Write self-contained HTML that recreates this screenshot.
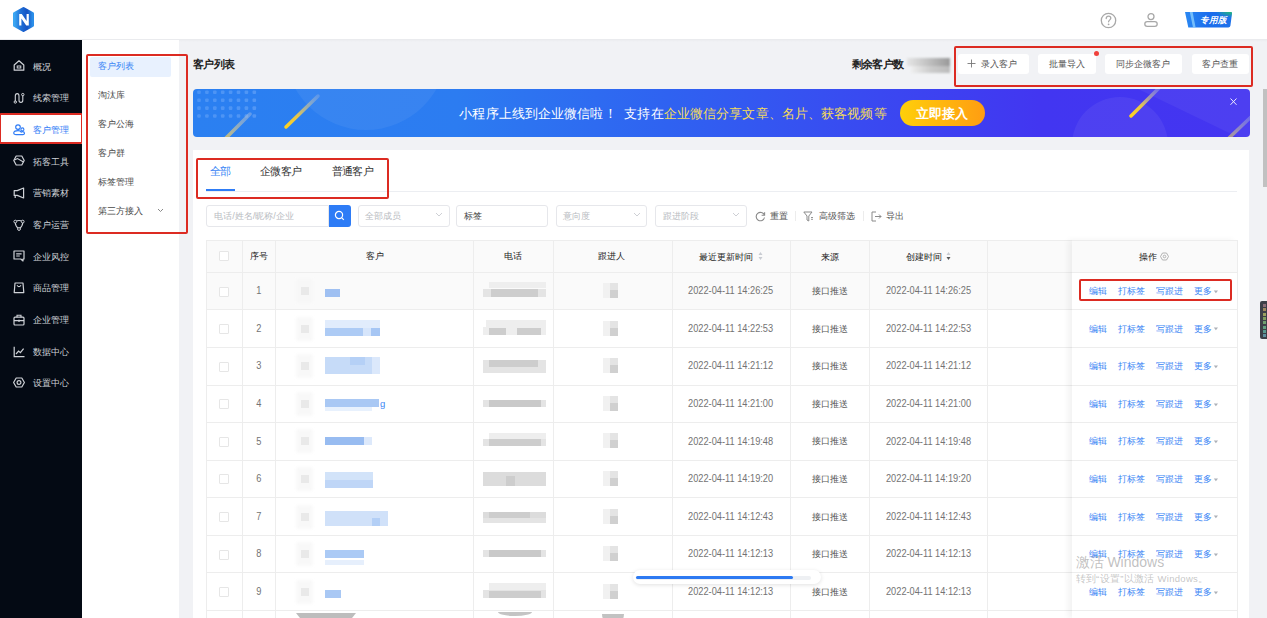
<!DOCTYPE html><html><head><meta charset="utf-8"><title>客户列表</title><style>
*{margin:0;padding:0;box-sizing:border-box}
html,body{width:1267px;height:618px;overflow:hidden;background:#f1f2f5;font-family:"Liberation Sans",sans-serif;color:#333;position:relative}
.a{position:absolute}
.t{position:absolute;white-space:nowrap;line-height:1}
.red{position:absolute;border:2px solid #dc2b22;border-radius:2px}
.mi{position:absolute;left:33px;font-size:9.24px;color:#cfd2d7;line-height:1;white-space:nowrap}
.ic{position:absolute;left:13px}
.si{position:absolute;left:98px;font-size:9.24px;color:#555;line-height:1;white-space:nowrap}
.btn{position:absolute;top:54px;height:20px;background:#fff;border-radius:3px}
.bt{position:absolute;top:59.5px;font-size:9.24px;color:#555;line-height:1;white-space:nowrap}
.inp{position:absolute;top:205px;height:21.5px;background:#fff;border:1px solid #e6e7eb;border-radius:3px}
.ph{position:absolute;top:211.6px;font-size:9.24px;color:#b9bcc2;line-height:1;white-space:nowrap}
.chev{position:absolute;top:212px}
.hl{position:absolute;background:#ededed}
.th{position:absolute;top:252.5px;font-size:9.24px;color:#222;font-weight:500;line-height:1;white-space:nowrap}
.td{position:absolute;font-size:9.24px;color:#555;line-height:1;white-space:nowrap}
.act{position:absolute;font-size:9.24px;color:#3b86f5;line-height:1;white-space:nowrap}
.cb{position:absolute;left:219px;width:10px;height:10px;border:1px solid #e6e6e6;border-radius:1px;background:#fff}
</style></head><body>
<div class="a" style="left:0;top:0;width:1267px;height:39px;background:#fff"></div>
<div class="a" style="left:0;top:39px;width:1267px;height:3px;background:linear-gradient(180deg,#e9eaed,#f1f2f5)"></div>
<svg class="a" style="left:11px;top:6px" width="25" height="27" viewBox="0 0 25 27">
<defs><linearGradient id="lg" x1="0" y1="0" x2="1" y2="0"><stop offset="0" stop-color="#3ba6f2"/><stop offset="0.35" stop-color="#1f6fd6"/><stop offset="0.7" stop-color="#1553c4"/><stop offset="1" stop-color="#2a8de8"/></linearGradient></defs>
<path d="M12.5 2.5 L21.5 7.5 L21.5 19.5 L12.5 24.5 L3.5 19.5 L3.5 7.5 Z" fill="url(#lg)" stroke="url(#lg)" stroke-width="3" stroke-linejoin="round"/>
<path d="M8.2 19.5 V8 H10.8 L15.6 15 V8 H17.8 V19.5 H15.2 L10.4 12.4 V19.5 Z" fill="#fff"/>
</svg>
<svg class="a" style="left:1100px;top:12px" width="17" height="17" viewBox="0 0 17 17">
<circle cx="8.5" cy="8.5" r="7.2" fill="none" stroke="#a8a8a8" stroke-width="1.3"/>
<path d="M6.2 6.6 C6.2 4.9 7.3 4.2 8.5 4.2 C9.8 4.2 10.8 5 10.8 6.3 C10.8 7.8 8.6 8 8.6 9.8" fill="none" stroke="#a8a8a8" stroke-width="1.3" stroke-linecap="round"/>
<circle cx="8.6" cy="12.3" r="0.9" fill="#a8a8a8"/>
</svg>
<svg class="a" style="left:1143px;top:12px" width="16" height="16" viewBox="0 0 16 16">
<circle cx="8" cy="4.6" r="3" fill="none" stroke="#a8a8a8" stroke-width="1.3"/>
<rect x="1.8" y="9.6" width="12.4" height="4.8" rx="2.4" fill="none" stroke="#a8a8a8" stroke-width="1.3"/>
</svg>
<svg class="a" style="left:1184px;top:11px" width="49" height="18" viewBox="0 0 49 18">
<defs><linearGradient id="bg1" x1="0" y1="0" x2="1" y2="0"><stop offset="0" stop-color="#2a88f2"/><stop offset="0.5" stop-color="#1a6cec"/><stop offset="1" stop-color="#1d72ea"/></linearGradient>
<radialGradient id="bgg" cx="1" cy="0" r="0.35"><stop offset="0" stop-color="#22c06a" stop-opacity="0.95"/><stop offset="1" stop-color="#22c06a" stop-opacity="0"/></radialGradient></defs>
<path d="M1 1 H47 Q48.2 1 48 2.5 L46.4 14.8 Q46.1 16.6 44.3 16.6 H4.3 Z" fill="url(#bg1)"/>
<path d="M1 1 H47 Q48.2 1 48 2.5 L46.4 14.8 Q46.1 16.6 44.3 16.6 H4.3 Z" fill="url(#bgg)"/>
<path d="M5.8 1 L8.6 1 L11.6 16.6 L9 16.6 Z" fill="#8fd3ff" opacity="0.75"/>
<text x="15.8" y="12.3" font-size="8.6" font-weight="900" font-style="italic" fill="#fff">专用版</text>
</svg>
<div class="a" style="left:0;top:40px;width:82px;height:578px;background:#040a14"></div>
<svg class="ic" style="top:59.60px" width="12" height="12" viewBox="0 0 12 12"><path d="M1.2 5 L6 0.8 L10.8 5 V10.2 H1.2 Z" fill="none" stroke="#cfd2d7" stroke-width="1.2" stroke-linejoin="round"/><rect x="4.2" y="6" width="3.6" height="2" fill="none" stroke="#cfd2d7" stroke-width="1"/></svg>
<div class="mi" style="top:62.70px;color:#cfd2d7">概况</div>
<svg class="ic" style="top:91.50px" width="12" height="12" viewBox="0 0 12 12"><path d="M2.3 9.6 V4 Q2.3 1.6 4.2 1.6 Q6 1.6 6 4 V8.2 Q6 10.4 7.9 10.4 Q9.8 10.4 9.8 8.2 V3.6" fill="none" stroke="#cfd2d7" stroke-width="1.1"/><circle cx="2.3" cy="10" r="1.2" fill="none" stroke="#cfd2d7" stroke-width="1"/><circle cx="9.8" cy="2.6" r="1.2" fill="none" stroke="#cfd2d7" stroke-width="1"/></svg>
<div class="mi" style="top:94.35px;color:#cfd2d7">线索管理</div>
<div class="a" style="left:0;top:114.5px;width:82px;height:29px;background:#fff"></div>
<svg class="ic" style="top:124.20px" width="12" height="12" viewBox="0 0 12 12"><circle cx="5" cy="3.1" r="2.3" fill="none" stroke="#2f7cf6" stroke-width="1.2"/><circle cx="9.4" cy="5.4" r="1.5" fill="none" stroke="#2f7cf6" stroke-width="1.1"/><path d="M3.2 10.6 Q0.6 10.6 0.8 8.6 Q1.2 6.6 5 6.6 Q7.6 6.6 8.3 8.2 Q8.8 7.6 9.6 7.7 Q11.6 8 11.4 9.6 Q11.2 10.6 10 10.6 Z" fill="none" stroke="#2f7cf6" stroke-width="1.2" stroke-linejoin="round"/></svg>
<div class="mi" style="top:126.00px;color:#2f7cf6">客户管理</div>
<svg class="ic" style="top:155.40px" width="12" height="12" viewBox="0 0 12 12"><path d="M3.2 1 H8.8 L11.2 5.5 L8.8 10 H3.2 L0.8 5.5 Z" fill="none" stroke="#cfd2d7" stroke-width="1.2" stroke-linejoin="round"/><path d="M1.5 5 L4.5 3.5 L10.5 7" fill="none" stroke="#cfd2d7" stroke-width="1.1"/></svg>
<div class="mi" style="top:157.65px;color:#cfd2d7">拓客工具</div>
<svg class="ic" style="top:186.60px" width="12" height="12" viewBox="0 0 12 12"><path d="M1.2 3.6 H4.2 L10.6 1 V11 L4.2 8.4 H1.2 Z" fill="none" stroke="#cfd2d7" stroke-width="1.2" stroke-linejoin="round"/><path d="M2.2 8.4 V11" stroke="#cfd2d7" stroke-width="1.2"/></svg>
<div class="mi" style="top:189.30px;color:#cfd2d7">营销素材</div>
<svg class="ic" style="top:218.60px" width="12" height="12" viewBox="0 0 12 12"><path d="M2.5 2.5 Q6 0.5 9.5 2.5 Q10.5 6.5 6 10 Q1.5 6.5 2.5 2.5 Z" fill="none" stroke="#cfd2d7" stroke-width="1.1"/><circle cx="2.3" cy="2.6" r="1.4" fill="#040a14" stroke="#cfd2d7" stroke-width="1"/><circle cx="9.7" cy="2.6" r="1.4" fill="#040a14" stroke="#cfd2d7" stroke-width="1"/><circle cx="6" cy="10" r="1.4" fill="#040a14" stroke="#cfd2d7" stroke-width="1"/></svg>
<div class="mi" style="top:220.95px;color:#cfd2d7">客户运营</div>
<svg class="ic" style="top:250.40px" width="12" height="12" viewBox="0 0 12 12"><path d="M1 1 H11 V9 H10 V11 L7.8 9 H1 Z" fill="none" stroke="#cfd2d7" stroke-width="1.2" stroke-linejoin="round"/><path d="M3.2 3.8 H8.6 M3.2 6 H6.8" stroke="#cfd2d7" stroke-width="1.2"/></svg>
<div class="mi" style="top:252.60px;color:#cfd2d7">企业风控</div>
<svg class="ic" style="top:282.30px" width="12" height="12" viewBox="0 0 12 12"><path d="M2 1 H10 L10.8 10.6 H1.2 Z" fill="none" stroke="#cfd2d7" stroke-width="1.2" stroke-linejoin="round"/><path d="M4 3.2 Q6 6 8 3.2" fill="none" stroke="#cfd2d7" stroke-width="1.1"/></svg>
<div class="mi" style="top:284.25px;color:#cfd2d7">商品管理</div>
<svg class="ic" style="top:313.60px" width="12" height="12" viewBox="0 0 12 12"><rect x="1" y="3.2" width="10" height="7.8" rx="1" fill="none" stroke="#cfd2d7" stroke-width="1.2"/><path d="M4 3.2 V1.2 H8 V3.2 M1 6.6 H11" fill="none" stroke="#cfd2d7" stroke-width="1.1"/><rect x="5" y="5.8" width="2" height="1.8" fill="#cfd2d7"/></svg>
<div class="mi" style="top:315.90px;color:#cfd2d7">企业管理</div>
<svg class="ic" style="top:346.10px" width="12" height="12" viewBox="0 0 12 12"><path d="M1.2 0.8 V10.6 H11.5" fill="none" stroke="#cfd2d7" stroke-width="1.2"/><path d="M3 8 L5.6 5 L7.4 6.6 L10.6 2.6" fill="none" stroke="#cfd2d7" stroke-width="1.2"/></svg>
<div class="mi" style="top:347.55px;color:#cfd2d7">数据中心</div>
<svg class="ic" style="top:377.40px" width="12" height="12" viewBox="0 0 12 12"><path d="M3.2 1 H8.8 L11.4 5.5 L8.8 10 H3.2 L0.6 5.5 Z" fill="none" stroke="#cfd2d7" stroke-width="1.2" stroke-linejoin="round"/><circle cx="6" cy="5.5" r="1.9" fill="none" stroke="#cfd2d7" stroke-width="1.2"/></svg>
<div class="mi" style="top:379.20px;color:#cfd2d7">设置中心</div>
<div class="red" style="left:-1px;top:113.4px;width:84.2px;height:30.6px"></div>
<div class="a" style="left:82px;top:40px;width:97px;height:578px;background:#fff"></div>
<div class="a" style="left:90px;top:57px;width:81px;height:19.5px;background:#e8f1fe;border-radius:2px"></div>
<div class="si" style="top:62.00px;color:#3b86f5">客户列表</div>
<div class="si" style="top:91.10px;color:#4a4a4a">淘汰库</div>
<div class="si" style="top:120.20px;color:#4a4a4a">客户公海</div>
<div class="si" style="top:148.90px;color:#4a4a4a">客户群</div>
<div class="si" style="top:178.20px;color:#4a4a4a">标签管理</div>
<div class="si" style="top:207.40px;color:#4a4a4a">第三方接入</div>
<svg class="a" style="left:157px;top:208px" width="7" height="5" viewBox="0 0 7 5"><path d="M1 1 L3.5 3.5 L6 1" fill="none" stroke="#888" stroke-width="1"/></svg>
<div class="red" style="left:86px;top:54px;width:102px;height:179.5px"></div>
<div class="t" style="left:193px;top:59px;font-size:10.56px;font-weight:bold;color:#222;letter-spacing:-0.6px">客户列表</div>
<div class="t" style="left:851.5px;top:58.5px;font-size:10.56px;font-weight:bold;color:#222;letter-spacing:-0.6px">剩余客户数</div>
<div class="a" style="left:907px;top:58px;width:43px;height:15px;filter:blur(0.8px)"><div class="a" style="left:0;top:0;width:43px;height:8px;background:linear-gradient(90deg,#e5e5e5,#c8c8c8 40%,#999 100%)"></div><div class="a" style="left:4px;top:8px;width:39px;height:7px;background:linear-gradient(90deg,#eee,#ccc 50%,#bbb)"></div></div>
<div class="red" style="left:954px;top:46px;width:299px;height:40.5px"></div>
<div class="btn" style="left:958.4px;width:70.2px"></div>
<div class="bt" style="left:981.3px">录入客户</div>
<div class="btn" style="left:1038.2px;width:58.1px"></div>
<div class="bt" style="left:1049px">批量导入</div>
<div class="btn" style="left:1105.3px;width:76.3px"></div>
<div class="bt" style="left:1116.2px">同步企微客户</div>
<div class="btn" style="left:1191.6px;width:57.1px"></div>
<div class="bt" style="left:1201.5px">客户查重</div>
<svg class="a" style="left:966.5px;top:58.6px" width="9" height="9" viewBox="0 0 9 9"><path d="M4.5 0.5 V8.5 M0.5 4.5 H8.5" stroke="#777" stroke-width="0.9"/></svg>
<div class="a" style="left:1093.8px;top:50.7px;width:5px;height:5px;border-radius:50%;background:#f0413c"></div>
<div class="a" style="left:192.8px;top:89px;width:1057px;height:47.5px;border-radius:4px;overflow:hidden;background:linear-gradient(90deg,#2b80f1 0%,#2c7cf1 25%,#2f62f1 45%,#3a48f1 65%,#4236f1 80%,#4435f1 100%)">
<svg class="a" style="left:0;top:0" width="1057" height="48" viewBox="0 0 1057 48">
<defs>
<linearGradient id="st1" x1="0" y1="1" x2="1" y2="0"><stop offset="0" stop-color="#ffd21f"/><stop offset="0.35" stop-color="#e6c64a"/><stop offset="1" stop-color="#b9c3d8" stop-opacity="0.3"/></linearGradient>
<linearGradient id="st2" x1="0" y1="1" x2="1" y2="0"><stop offset="0" stop-color="#d8c26a" stop-opacity="0.9"/><stop offset="1" stop-color="#b4c4e0" stop-opacity="0.4"/></linearGradient>
</defs>
<circle cx="173" cy="-40" r="81" fill="#ffffff" opacity="0.06"/>
<circle cx="927" cy="56" r="48" fill="#ffffff" opacity="0.06"/>
<path d="M945 0 L1057 0 L1057 54 Z" fill="#ffffff" opacity="0.05"/>


<rect x="4.2" y="1.5" width="3.6" height="3.6" rx="1" fill="#9cc4ff" opacity="0.28"/><rect x="12.1" y="1.5" width="3.6" height="3.6" rx="1" fill="#9cc4ff" opacity="0.29"/><rect x="20.0" y="1.5" width="3.6" height="3.6" rx="1" fill="#9cc4ff" opacity="0.30"/><rect x="27.9" y="1.5" width="3.6" height="3.6" rx="1" fill="#9cc4ff" opacity="0.31"/><rect x="35.8" y="1.5" width="3.6" height="3.6" rx="1" fill="#9cc4ff" opacity="0.31"/><rect x="43.7" y="1.5" width="3.6" height="3.6" rx="1" fill="#9cc4ff" opacity="0.32"/><rect x="51.6" y="1.5" width="3.6" height="3.6" rx="1" fill="#9cc4ff" opacity="0.33"/><rect x="59.5" y="1.5" width="3.6" height="3.6" rx="1" fill="#9cc4ff" opacity="0.34"/><rect x="4.2" y="9.4" width="3.6" height="3.6" rx="1" fill="#9cc4ff" opacity="0.28"/><rect x="12.1" y="9.4" width="3.6" height="3.6" rx="1" fill="#9cc4ff" opacity="0.29"/><rect x="20.0" y="9.4" width="3.6" height="3.6" rx="1" fill="#9cc4ff" opacity="0.30"/><rect x="27.9" y="9.4" width="3.6" height="3.6" rx="1" fill="#9cc4ff" opacity="0.31"/><rect x="35.8" y="9.4" width="3.6" height="3.6" rx="1" fill="#9cc4ff" opacity="0.31"/><rect x="43.7" y="9.4" width="3.6" height="3.6" rx="1" fill="#9cc4ff" opacity="0.32"/><rect x="51.6" y="9.4" width="3.6" height="3.6" rx="1" fill="#9cc4ff" opacity="0.33"/><rect x="59.5" y="9.4" width="3.6" height="3.6" rx="1" fill="#9cc4ff" opacity="0.34"/><rect x="4.2" y="17.3" width="3.6" height="3.6" rx="1" fill="#9cc4ff" opacity="0.28"/><rect x="12.1" y="17.3" width="3.6" height="3.6" rx="1" fill="#9cc4ff" opacity="0.29"/><rect x="20.0" y="17.3" width="3.6" height="3.6" rx="1" fill="#9cc4ff" opacity="0.30"/><rect x="27.9" y="17.3" width="3.6" height="3.6" rx="1" fill="#9cc4ff" opacity="0.31"/><rect x="35.8" y="17.3" width="3.6" height="3.6" rx="1" fill="#9cc4ff" opacity="0.31"/><rect x="43.7" y="17.3" width="3.6" height="3.6" rx="1" fill="#9cc4ff" opacity="0.32"/><rect x="51.6" y="17.3" width="3.6" height="3.6" rx="1" fill="#9cc4ff" opacity="0.33"/><rect x="59.5" y="17.3" width="3.6" height="3.6" rx="1" fill="#9cc4ff" opacity="0.34"/><rect x="4.2" y="25.2" width="3.6" height="3.6" rx="1" fill="#9cc4ff" opacity="0.28"/><rect x="12.1" y="25.2" width="3.6" height="3.6" rx="1" fill="#9cc4ff" opacity="0.29"/><rect x="20.0" y="25.2" width="3.6" height="3.6" rx="1" fill="#9cc4ff" opacity="0.30"/><rect x="27.9" y="25.2" width="3.6" height="3.6" rx="1" fill="#9cc4ff" opacity="0.31"/><rect x="35.8" y="25.2" width="3.6" height="3.6" rx="1" fill="#9cc4ff" opacity="0.31"/><rect x="43.7" y="25.2" width="3.6" height="3.6" rx="1" fill="#9cc4ff" opacity="0.32"/><rect x="51.6" y="25.2" width="3.6" height="3.6" rx="1" fill="#9cc4ff" opacity="0.33"/><rect x="59.5" y="25.2" width="3.6" height="3.6" rx="1" fill="#9cc4ff" opacity="0.34"/>
<path d="M33 49 L57 25" stroke="url(#st2)" stroke-width="3.5" stroke-linecap="round"/>
<path d="M93 38 L125 7" stroke="url(#st1)" stroke-width="3.5" stroke-linecap="round"/>
<path d="M938 27 L966 -1" stroke="url(#st1)" stroke-width="3.5" stroke-linecap="round"/>
<path d="M1036 49 L1058 28" stroke="url(#st2)" stroke-width="3.5" stroke-linecap="round" opacity="0.8"/>
<path d="M1037.5 9.5 L1043.5 15.8 M1043.5 9.5 L1037.5 15.8" stroke="#fff" stroke-width="1" opacity="0.9"/>
</svg>
<div class="t" style="left:266.5px;top:18px;font-size:13.2px;color:#fff;letter-spacing:0.12px">小程序上线到企业微信啦！&nbsp;&nbsp;支持在<span style="color:#f5dc5a">企业微信分享文章、名片、获客视频等</span></div>
<div class="a" style="left:707.5px;top:10.8px;width:84.5px;height:26px;border-radius:13px;background:linear-gradient(90deg,#ffcf0a,#ff9d12)"></div>
<div class="t" style="left:723px;top:17.5px;font-size:13.2px;font-weight:bold;color:#fff">立即接入</div>
</div>
<div class="a" style="left:192.8px;top:150px;width:1056.7px;height:468px;background:#fff"></div>
<div class="t" style="left:210px;top:166px;font-size:10.56px;color:#3b86f5;letter-spacing:-0.6px">全部</div>
<div class="t" style="left:260px;top:166px;font-size:10.56px;color:#333;letter-spacing:-0.6px">企微客户</div>
<div class="t" style="left:331.5px;top:166px;font-size:10.56px;color:#333;letter-spacing:-0.6px">普通客户</div>
<div class="a" style="left:206px;top:191px;width:1031px;height:1px;background:#eceef2"></div>
<div class="a" style="left:206px;top:189px;width:29px;height:2.3px;background:#2e7cf6"></div>
<div class="red" style="left:195.5px;top:157.5px;width:193.5px;height:41px"></div>
<div class="inp" style="left:206px;width:123px;border-radius:3px 0 0 3px"></div>
<div class="ph" style="left:214.2px">电话/姓名/昵称/企业</div>
<div class="a" style="left:328.5px;top:205px;width:22px;height:21.5px;background:#2e7cf6;border-radius:0 3px 3px 0"></div>
<svg class="a" style="left:334px;top:210px" width="11" height="11" viewBox="0 0 11 11"><circle cx="5" cy="5" r="3.6" fill="none" stroke="#fff" stroke-width="1.2"/><path d="M7.6 7.6 L9.8 9.8" stroke="#fff" stroke-width="1.2"/></svg>
<div class="inp" style="left:357.5px;width:92.0px"></div>
<div class="ph" style="left:365px;color:#b9bcc2">全部成员</div>
<svg class="chev" style="left:434.5px" width="8" height="6" viewBox="0 0 8 6"><path d="M1 1 L4 4 L7 1" fill="none" stroke="#c8cbd0" stroke-width="0.9"/></svg>
<div class="inp" style="left:456px;width:92.0px"></div>
<div class="ph" style="left:464.4px;color:#444">标签</div>
<div class="inp" style="left:555.8px;width:91.7px"></div>
<div class="ph" style="left:563.3px;color:#b9bcc2">意向度</div>
<svg class="chev" style="left:632.5px" width="8" height="6" viewBox="0 0 8 6"><path d="M1 1 L4 4 L7 1" fill="none" stroke="#c8cbd0" stroke-width="0.9"/></svg>
<div class="inp" style="left:654.5px;width:92.0px"></div>
<div class="ph" style="left:662.8px;color:#b9bcc2">跟进阶段</div>
<svg class="chev" style="left:731.5px" width="8" height="6" viewBox="0 0 8 6"><path d="M1 1 L4 4 L7 1" fill="none" stroke="#c8cbd0" stroke-width="0.9"/></svg>
<svg class="a" style="left:754.5px;top:211px" width="11" height="11" viewBox="0 0 11 11"><path d="M9.3 4 A4.2 4.2 0 1 0 9.5 6.5" fill="none" stroke="#8a8a8a" stroke-width="1.1"/><path d="M9.6 1.2 V4.2 H6.6" fill="none" stroke="#8a8a8a" stroke-width="1.1"/></svg>
<div class="t" style="left:769.8px;top:211.5px;font-size:9.24px;color:#555">重置</div>
<div class="a" style="left:795px;top:211px;width:1px;height:10px;background:#ececec"></div>
<svg class="a" style="left:803px;top:211px" width="11" height="11" viewBox="0 0 11 11"><path d="M0.8 1 H9 L5.8 5 V10 L4 9 V5 Z" fill="none" stroke="#8a8a8a" stroke-width="1" stroke-linejoin="round"/><path d="M8 6.5 H10 M8 8.3 H10" stroke="#8a8a8a" stroke-width="0.9"/></svg>
<div class="t" style="left:818.8px;top:211.5px;font-size:9.24px;color:#555">高级筛选</div>
<div class="a" style="left:862.5px;top:211px;width:1px;height:10px;background:#ececec"></div>
<svg class="a" style="left:870.5px;top:211px" width="11" height="11" viewBox="0 0 11 11"><path d="M5 1 H1 V10 H5" fill="none" stroke="#8a8a8a" stroke-width="1"/><path d="M4 5.5 H10 M8 3.5 L10 5.5 L8 7.5" fill="none" stroke="#8a8a8a" stroke-width="1"/></svg>
<div class="t" style="left:886.3px;top:211.5px;font-size:9.24px;color:#555">导出</div>
<div class="a" style="left:206px;top:240px;width:1031px;height:32px;background:#fafafa"></div>
<div class="a" style="left:206px;top:272.2px;width:1031px;height:37.5px;background:#fafafa"></div>
<div class="hl" style="left:206px;top:240px;width:1031px;height:1px"></div>
<div class="hl" style="left:206px;top:271.80px;width:1031px;height:1px"></div>
<div class="hl" style="left:206px;top:309.38px;width:1031px;height:1px"></div>
<div class="hl" style="left:206px;top:346.96px;width:1031px;height:1px"></div>
<div class="hl" style="left:206px;top:384.54px;width:1031px;height:1px"></div>
<div class="hl" style="left:206px;top:422.12px;width:1031px;height:1px"></div>
<div class="hl" style="left:206px;top:459.70px;width:1031px;height:1px"></div>
<div class="hl" style="left:206px;top:497.28px;width:1031px;height:1px"></div>
<div class="hl" style="left:206px;top:534.86px;width:1031px;height:1px"></div>
<div class="hl" style="left:206px;top:572.44px;width:1031px;height:1px"></div>
<div class="hl" style="left:206px;top:610.02px;width:1031px;height:1px"></div>
<div class="hl" style="left:205.50px;top:240px;width:1px;height:378px"></div>
<div class="hl" style="left:241.80px;top:240px;width:1px;height:378px"></div>
<div class="hl" style="left:275.00px;top:240px;width:1px;height:378px"></div>
<div class="hl" style="left:473.10px;top:240px;width:1px;height:378px"></div>
<div class="hl" style="left:552.80px;top:240px;width:1px;height:378px"></div>
<div class="hl" style="left:671.50px;top:240px;width:1px;height:378px"></div>
<div class="hl" style="left:789.70px;top:240px;width:1px;height:378px"></div>
<div class="hl" style="left:868.80px;top:240px;width:1px;height:378px"></div>
<div class="hl" style="left:987.10px;top:240px;width:1px;height:378px"></div>
<div class="hl" style="left:1236.50px;top:240px;width:1px;height:378px"></div>
<div class="a" style="left:1072px;top:240px;width:165px;height:378px;background:#fff;box-shadow:-4px 0 6px rgba(0,0,0,0.05)"></div>
<div class="a" style="left:1072px;top:240px;width:165px;height:32px;background:#fafafa"></div>
<div class="hl" style="left:1072px;top:271.80px;width:165px;height:1px"></div>
<div class="hl" style="left:1072px;top:309.38px;width:165px;height:1px"></div>
<div class="hl" style="left:1072px;top:346.96px;width:165px;height:1px"></div>
<div class="hl" style="left:1072px;top:384.54px;width:165px;height:1px"></div>
<div class="hl" style="left:1072px;top:422.12px;width:165px;height:1px"></div>
<div class="hl" style="left:1072px;top:459.70px;width:165px;height:1px"></div>
<div class="hl" style="left:1072px;top:497.28px;width:165px;height:1px"></div>
<div class="hl" style="left:1072px;top:534.86px;width:165px;height:1px"></div>
<div class="hl" style="left:1072px;top:572.44px;width:165px;height:1px"></div>
<div class="hl" style="left:1072px;top:610.02px;width:165px;height:1px"></div>
<div class="hl" style="left:1072px;top:240px;width:165px;height:1px"></div>
<div class="hl" style="left:1236.5px;top:240px;width:1px;height:378px"></div>
<div class="cb" style="top:251px"></div>
<div class="th" style="left:258.9px;top:252px;transform:translateX(-50%);">序号</div>
<div class="th" style="left:374.5px;top:252px;transform:translateX(-50%);">客户</div>
<div class="th" style="left:513px;top:252px;transform:translateX(-50%);">电话</div>
<div class="th" style="left:611px;top:252px;transform:translateX(-50%);">跟进人</div>
<div class="th" style="left:698.9px">最近更新时间</div>
<svg class="a" style="left:757.5px;top:251px" width="5" height="10" viewBox="0 0 5 10"><path d="M0.5 4 L2.5 1 L4.5 4 Z M0.5 6 L2.5 9 L4.5 6 Z" fill="#c9ccd2"/></svg>
<div class="th" style="left:820.8px">来源</div>
<div class="th" style="left:905.6px">创建时间</div>
<svg class="a" style="left:946px;top:251px" width="5" height="10" viewBox="0 0 5 10"><path d="M0.5 4 L2.5 1 L4.5 4 Z" fill="#c9ccd2"/><path d="M0.5 6 L2.5 9 L4.5 6 Z" fill="#555"/></svg>
<div class="th" style="left:1138.5px">操作</div>
<svg class="a" style="left:1160px;top:252px" width="9" height="9" viewBox="0 0 9 9"><path d="M2.5 1 H6.5 L8.5 4.5 L6.5 8 H2.5 L0.5 4.5 Z" fill="none" stroke="#aaa" stroke-width="0.9" stroke-linejoin="round"/><circle cx="4.5" cy="4.5" r="1.3" fill="none" stroke="#aaa" stroke-width="0.9"/></svg>
<div class="cb" style="top:286.59px"></div>
<div class="td" style="left:258.9px;top:287.19px;transform:translateX(-50%) scaleY(1.18);color:#737373">1</div>
<div class="a" style="left:300.5px;top:287.09px;width:8.5px;height:8px;background:#cbcbcb;filter:blur(0.5px)"></div>
<div class="a" style="left:296px;top:279.09px;width:17px;height:24px;background:#f6f6f6;filter:blur(1.5px);opacity:0.7"></div>
<div class="a" style="left:324.7px;top:288.59px;width:15.7px;height:8.0px;background:#9fc0f2;filter:blur(0.5px)"></div>
<div class="a" style="left:489px;top:282.09px;width:57px;height:6px;background:#eeeeee;filter:blur(0.7px)"></div>
<div class="a" style="left:483px;top:289.09px;width:63px;height:8px;background:#e4e4e4;filter:blur(0.7px)"></div>
<div class="a" style="left:491px;top:289.09px;width:47px;height:8px;background:#cdcdcd;filter:blur(0.7px)"></div>
<div class="a" style="left:603px;top:283.09px;width:7px;height:15px;background:#f1f1f1;filter:blur(0.6px)"></div>
<div class="a" style="left:610px;top:283.09px;width:8px;height:15px;background:linear-gradient(180deg,#e4e4e4 0%,#e4e4e4 45%,#d0d0d0 50%,#d0d0d0 100%);filter:blur(0.6px)"></div>
<div class="td" style="left:730.6px;top:287.19px;transform:translateX(-50%) scaleY(1.18);color:#737373">2022-04-11 14:26:25</div>
<div class="td" style="left:829.7px;top:287.09px;transform:translateX(-50%);">接口推送</div>
<div class="td" style="left:928.5px;top:287.19px;transform:translateX(-50%) scaleY(1.18);color:#737373">2022-04-11 14:26:25</div>
<div class="act" style="left:1088.7px;top:287.09px">编辑</div>
<div class="act" style="left:1118.2px;top:287.09px">打标签</div>
<div class="act" style="left:1156.2px;top:287.09px">写跟进</div>
<div class="act" style="left:1194px;top:287.09px">更多</div>
<svg class="a" style="left:1212.8px;top:289.89px" width="6" height="4" viewBox="0 0 6 4"><path d="M0.8 0.6 H5 L2.9 3.2 Z" fill="#adb1b8"/></svg>
<div class="cb" style="top:324.17px"></div>
<div class="td" style="left:258.9px;top:324.77px;transform:translateX(-50%) scaleY(1.18);color:#737373">2</div>
<div class="a" style="left:300.5px;top:324.67px;width:8.5px;height:8px;background:#cbcbcb;filter:blur(0.5px)"></div>
<div class="a" style="left:296px;top:316.67px;width:17px;height:24px;background:#f6f6f6;filter:blur(1.5px);opacity:0.7"></div>
<div class="a" style="left:324.7px;top:319.67px;width:55.3px;height:8px;background:#e1ecfc;filter:blur(0.5px)"></div>
<div class="a" style="left:324.7px;top:327.67px;width:55.3px;height:8px;background:#d6e5fb;filter:blur(0.5px)"></div>
<div class="a" style="left:324.7px;top:327.67px;width:38.3px;height:8px;background:#adcbf5;filter:blur(0.5px)"></div>
<div class="a" style="left:371px;top:327.67px;width:9.0px;height:8px;background:#a6c6f4;filter:blur(0.5px)"></div>
<div class="a" style="left:486px;top:319.67px;width:60px;height:7px;background:#eeeeee;filter:blur(0.7px)"></div>
<div class="a" style="left:483px;top:326.67px;width:63px;height:8px;background:#eeeeee;filter:blur(0.7px)"></div>
<div class="a" style="left:489px;top:327.67px;width:17px;height:7px;background:#cdcdcd;filter:blur(0.7px)"></div>
<div class="a" style="left:517px;top:327.67px;width:24px;height:7px;background:#cdcdcd;filter:blur(0.7px)"></div>
<div class="a" style="left:603px;top:320.67px;width:7px;height:15px;background:#f1f1f1;filter:blur(0.6px)"></div>
<div class="a" style="left:610px;top:320.67px;width:8px;height:15px;background:linear-gradient(180deg,#e4e4e4 0%,#e4e4e4 45%,#d0d0d0 50%,#d0d0d0 100%);filter:blur(0.6px)"></div>
<div class="td" style="left:730.6px;top:324.77px;transform:translateX(-50%) scaleY(1.18);color:#737373">2022-04-11 14:22:53</div>
<div class="td" style="left:829.7px;top:324.67px;transform:translateX(-50%);">接口推送</div>
<div class="td" style="left:928.5px;top:324.77px;transform:translateX(-50%) scaleY(1.18);color:#737373">2022-04-11 14:22:53</div>
<div class="act" style="left:1088.7px;top:324.67px">编辑</div>
<div class="act" style="left:1118.2px;top:324.67px">打标签</div>
<div class="act" style="left:1156.2px;top:324.67px">写跟进</div>
<div class="act" style="left:1194px;top:324.67px">更多</div>
<svg class="a" style="left:1212.8px;top:327.47px" width="6" height="4" viewBox="0 0 6 4"><path d="M0.8 0.6 H5 L2.9 3.2 Z" fill="#adb1b8"/></svg>
<div class="cb" style="top:361.75px"></div>
<div class="td" style="left:258.9px;top:362.35px;transform:translateX(-50%) scaleY(1.18);color:#737373">3</div>
<div class="a" style="left:300.5px;top:362.25px;width:8.5px;height:8px;background:#cbcbcb;filter:blur(0.5px)"></div>
<div class="a" style="left:296px;top:354.25px;width:17px;height:24px;background:#f6f6f6;filter:blur(1.5px);opacity:0.7"></div>
<div class="a" style="left:324.7px;top:357.25px;width:55.3px;height:17px;background:#dbe8fb;filter:blur(0.5px)"></div>
<div class="a" style="left:324.7px;top:357.25px;width:47.3px;height:17px;background:#c6dbf8;filter:blur(0.5px)"></div>
<div class="a" style="left:350px;top:357.25px;width:15.0px;height:8px;background:#b5d0f6;filter:blur(0.5px)"></div>
<div class="a" style="left:483px;top:360.25px;width:63px;height:7px;background:#e4e4e4;filter:blur(0.7px)"></div>
<div class="a" style="left:489px;top:360.25px;width:49px;height:7px;background:#cdcdcd;filter:blur(0.7px)"></div>
<div class="a" style="left:483px;top:367.25px;width:63px;height:6px;background:#e4e4e4;filter:blur(0.7px)"></div>
<div class="a" style="left:603px;top:358.25px;width:7px;height:15px;background:#f1f1f1;filter:blur(0.6px)"></div>
<div class="a" style="left:610px;top:358.25px;width:8px;height:15px;background:linear-gradient(180deg,#e4e4e4 0%,#e4e4e4 45%,#d0d0d0 50%,#d0d0d0 100%);filter:blur(0.6px)"></div>
<div class="td" style="left:730.6px;top:362.35px;transform:translateX(-50%) scaleY(1.18);color:#737373">2022-04-11 14:21:12</div>
<div class="td" style="left:829.7px;top:362.25px;transform:translateX(-50%);">接口推送</div>
<div class="td" style="left:928.5px;top:362.35px;transform:translateX(-50%) scaleY(1.18);color:#737373">2022-04-11 14:21:12</div>
<div class="act" style="left:1088.7px;top:362.25px">编辑</div>
<div class="act" style="left:1118.2px;top:362.25px">打标签</div>
<div class="act" style="left:1156.2px;top:362.25px">写跟进</div>
<div class="act" style="left:1194px;top:362.25px">更多</div>
<svg class="a" style="left:1212.8px;top:365.05px" width="6" height="4" viewBox="0 0 6 4"><path d="M0.8 0.6 H5 L2.9 3.2 Z" fill="#adb1b8"/></svg>
<div class="cb" style="top:399.33px"></div>
<div class="td" style="left:258.9px;top:399.93px;transform:translateX(-50%) scaleY(1.18);color:#737373">4</div>
<div class="a" style="left:300.5px;top:399.83px;width:8.5px;height:8px;background:#cbcbcb;filter:blur(0.5px)"></div>
<div class="a" style="left:296px;top:391.83px;width:17px;height:24px;background:#f6f6f6;filter:blur(1.5px);opacity:0.7"></div>
<div class="a" style="left:324.7px;top:398.83px;width:54.3px;height:8px;background:#a9c8f4;filter:blur(0.5px)"></div>
<div class="a" style="left:324.7px;top:406.83px;width:47.3px;height:4px;background:#e8f1fd;filter:blur(0.5px)"></div>
<div class="a" style="left:483px;top:399.83px;width:63px;height:7px;background:#e4e4e4;filter:blur(0.7px)"></div>
<div class="a" style="left:489px;top:399.83px;width:52px;height:7px;background:#c9c9c9;filter:blur(0.7px)"></div>
<div class="a" style="left:603px;top:395.83px;width:7px;height:15px;background:#f1f1f1;filter:blur(0.6px)"></div>
<div class="a" style="left:610px;top:395.83px;width:8px;height:15px;background:linear-gradient(180deg,#e4e4e4 0%,#e4e4e4 45%,#d0d0d0 50%,#d0d0d0 100%);filter:blur(0.6px)"></div>
<div class="td" style="left:730.6px;top:399.93px;transform:translateX(-50%) scaleY(1.18);color:#737373">2022-04-11 14:21:00</div>
<div class="td" style="left:829.7px;top:399.83px;transform:translateX(-50%);">接口推送</div>
<div class="td" style="left:928.5px;top:399.93px;transform:translateX(-50%) scaleY(1.18);color:#737373">2022-04-11 14:21:00</div>
<div class="act" style="left:1088.7px;top:399.83px">编辑</div>
<div class="act" style="left:1118.2px;top:399.83px">打标签</div>
<div class="act" style="left:1156.2px;top:399.83px">写跟进</div>
<div class="act" style="left:1194px;top:399.83px">更多</div>
<svg class="a" style="left:1212.8px;top:402.63px" width="6" height="4" viewBox="0 0 6 4"><path d="M0.8 0.6 H5 L2.9 3.2 Z" fill="#adb1b8"/></svg>
<div class="cb" style="top:436.91px"></div>
<div class="td" style="left:258.9px;top:437.51px;transform:translateX(-50%) scaleY(1.18);color:#737373">5</div>
<div class="a" style="left:300.5px;top:437.41px;width:8.5px;height:8px;background:#cbcbcb;filter:blur(0.5px)"></div>
<div class="a" style="left:296px;top:429.41px;width:17px;height:24px;background:#f6f6f6;filter:blur(1.5px);opacity:0.7"></div>
<div class="a" style="left:324.7px;top:437.41px;width:39.3px;height:8px;background:#98bcf1;filter:blur(0.5px)"></div>
<div class="a" style="left:364px;top:437.41px;width:8.0px;height:8px;background:#dde9fb;filter:blur(0.5px)"></div>
<div class="a" style="left:489px;top:433.41px;width:57px;height:6px;background:#eeeeee;filter:blur(0.7px)"></div>
<div class="a" style="left:483px;top:439.41px;width:63px;height:7px;background:#e4e4e4;filter:blur(0.7px)"></div>
<div class="a" style="left:489px;top:439.41px;width:52px;height:7px;background:#cdcdcd;filter:blur(0.7px)"></div>
<div class="a" style="left:603px;top:433.41px;width:7px;height:15px;background:#f1f1f1;filter:blur(0.6px)"></div>
<div class="a" style="left:610px;top:433.41px;width:8px;height:15px;background:linear-gradient(180deg,#e4e4e4 0%,#e4e4e4 45%,#d0d0d0 50%,#d0d0d0 100%);filter:blur(0.6px)"></div>
<div class="td" style="left:730.6px;top:437.51px;transform:translateX(-50%) scaleY(1.18);color:#737373">2022-04-11 14:19:48</div>
<div class="td" style="left:829.7px;top:437.41px;transform:translateX(-50%);">接口推送</div>
<div class="td" style="left:928.5px;top:437.51px;transform:translateX(-50%) scaleY(1.18);color:#737373">2022-04-11 14:19:48</div>
<div class="act" style="left:1088.7px;top:437.41px">编辑</div>
<div class="act" style="left:1118.2px;top:437.41px">打标签</div>
<div class="act" style="left:1156.2px;top:437.41px">写跟进</div>
<div class="act" style="left:1194px;top:437.41px">更多</div>
<svg class="a" style="left:1212.8px;top:440.21px" width="6" height="4" viewBox="0 0 6 4"><path d="M0.8 0.6 H5 L2.9 3.2 Z" fill="#adb1b8"/></svg>
<div class="cb" style="top:474.49px"></div>
<div class="td" style="left:258.9px;top:475.09px;transform:translateX(-50%) scaleY(1.18);color:#737373">6</div>
<div class="a" style="left:300.5px;top:474.99px;width:8.5px;height:8px;background:#cbcbcb;filter:blur(0.5px)"></div>
<div class="a" style="left:296px;top:466.99px;width:17px;height:24px;background:#f6f6f6;filter:blur(1.5px);opacity:0.7"></div>
<div class="a" style="left:324.7px;top:471.99px;width:48.3px;height:16px;background:#d2e3f9;filter:blur(0.5px)"></div>
<div class="a" style="left:324.7px;top:479.99px;width:48.3px;height:8px;background:#bfd6f7;filter:blur(0.5px)"></div>
<div class="a" style="left:483px;top:471.99px;width:63px;height:7px;background:#dcdcdc;filter:blur(0.7px)"></div>
<div class="a" style="left:483px;top:478.99px;width:63px;height:7px;background:#dcdcdc;filter:blur(0.7px)"></div>
<div class="a" style="left:506px;top:475.99px;width:9px;height:10px;background:#cdcdcd;filter:blur(0.7px)"></div>
<div class="a" style="left:603px;top:470.99px;width:7px;height:15px;background:#f1f1f1;filter:blur(0.6px)"></div>
<div class="a" style="left:610px;top:470.99px;width:8px;height:15px;background:linear-gradient(180deg,#e4e4e4 0%,#e4e4e4 45%,#d0d0d0 50%,#d0d0d0 100%);filter:blur(0.6px)"></div>
<div class="td" style="left:730.6px;top:475.09px;transform:translateX(-50%) scaleY(1.18);color:#737373">2022-04-11 14:19:20</div>
<div class="td" style="left:829.7px;top:474.99px;transform:translateX(-50%);">接口推送</div>
<div class="td" style="left:928.5px;top:475.09px;transform:translateX(-50%) scaleY(1.18);color:#737373">2022-04-11 14:19:20</div>
<div class="act" style="left:1088.7px;top:474.99px">编辑</div>
<div class="act" style="left:1118.2px;top:474.99px">打标签</div>
<div class="act" style="left:1156.2px;top:474.99px">写跟进</div>
<div class="act" style="left:1194px;top:474.99px">更多</div>
<svg class="a" style="left:1212.8px;top:477.79px" width="6" height="4" viewBox="0 0 6 4"><path d="M0.8 0.6 H5 L2.9 3.2 Z" fill="#adb1b8"/></svg>
<div class="cb" style="top:512.07px"></div>
<div class="td" style="left:258.9px;top:512.67px;transform:translateX(-50%) scaleY(1.18);color:#737373">7</div>
<div class="a" style="left:300.5px;top:512.57px;width:8.5px;height:8px;background:#cbcbcb;filter:blur(0.5px)"></div>
<div class="a" style="left:296px;top:504.57px;width:17px;height:24px;background:#f6f6f6;filter:blur(1.5px);opacity:0.7"></div>
<div class="a" style="left:324.7px;top:510.57px;width:63.3px;height:15px;background:#d0e1f9;filter:blur(0.5px)"></div>
<div class="a" style="left:372px;top:517.57px;width:8.0px;height:8px;background:#b3cff6;filter:blur(0.5px)"></div>
<div class="a" style="left:483px;top:511.57px;width:63px;height:6px;background:#dcdcdc;filter:blur(0.7px)"></div>
<div class="a" style="left:489px;top:511.57px;width:41px;height:6px;background:#cdcdcd;filter:blur(0.7px)"></div>
<div class="a" style="left:483px;top:517.57px;width:63px;height:5px;background:#e4e4e4;filter:blur(0.7px)"></div>
<div class="a" style="left:603px;top:508.57px;width:7px;height:15px;background:#f1f1f1;filter:blur(0.6px)"></div>
<div class="a" style="left:610px;top:508.57px;width:8px;height:15px;background:linear-gradient(180deg,#e4e4e4 0%,#e4e4e4 45%,#d0d0d0 50%,#d0d0d0 100%);filter:blur(0.6px)"></div>
<div class="td" style="left:730.6px;top:512.67px;transform:translateX(-50%) scaleY(1.18);color:#737373">2022-04-11 14:12:43</div>
<div class="td" style="left:829.7px;top:512.57px;transform:translateX(-50%);">接口推送</div>
<div class="td" style="left:928.5px;top:512.67px;transform:translateX(-50%) scaleY(1.18);color:#737373">2022-04-11 14:12:43</div>
<div class="act" style="left:1088.7px;top:512.57px">编辑</div>
<div class="act" style="left:1118.2px;top:512.57px">打标签</div>
<div class="act" style="left:1156.2px;top:512.57px">写跟进</div>
<div class="act" style="left:1194px;top:512.57px">更多</div>
<svg class="a" style="left:1212.8px;top:515.37px" width="6" height="4" viewBox="0 0 6 4"><path d="M0.8 0.6 H5 L2.9 3.2 Z" fill="#adb1b8"/></svg>
<div class="cb" style="top:549.65px"></div>
<div class="td" style="left:258.9px;top:550.25px;transform:translateX(-50%) scaleY(1.18);color:#737373">8</div>
<div class="a" style="left:300.5px;top:550.15px;width:8.5px;height:8px;background:#cbcbcb;filter:blur(0.5px)"></div>
<div class="a" style="left:296px;top:542.15px;width:17px;height:24px;background:#f6f6f6;filter:blur(1.5px);opacity:0.7"></div>
<div class="a" style="left:324.7px;top:550.15px;width:39.3px;height:8px;background:#abcaf5;filter:blur(0.5px)"></div>
<div class="a" style="left:324.7px;top:560.15px;width:39.3px;height:5px;background:#e6effc;filter:blur(0.5px)"></div>
<div class="a" style="left:483px;top:550.15px;width:63px;height:7px;background:#e4e4e4;filter:blur(0.7px)"></div>
<div class="a" style="left:489px;top:550.15px;width:52px;height:7px;background:#c9c9c9;filter:blur(0.7px)"></div>
<div class="a" style="left:603px;top:546.15px;width:7px;height:15px;background:#f1f1f1;filter:blur(0.6px)"></div>
<div class="a" style="left:610px;top:546.15px;width:8px;height:15px;background:linear-gradient(180deg,#e4e4e4 0%,#e4e4e4 45%,#d0d0d0 50%,#d0d0d0 100%);filter:blur(0.6px)"></div>
<div class="td" style="left:730.6px;top:550.25px;transform:translateX(-50%) scaleY(1.18);color:#737373">2022-04-11 14:12:13</div>
<div class="td" style="left:829.7px;top:550.15px;transform:translateX(-50%);">接口推送</div>
<div class="td" style="left:928.5px;top:550.25px;transform:translateX(-50%) scaleY(1.18);color:#737373">2022-04-11 14:12:13</div>
<div class="act" style="left:1088.7px;top:550.15px">编辑</div>
<div class="act" style="left:1118.2px;top:550.15px">打标签</div>
<div class="act" style="left:1156.2px;top:550.15px">写跟进</div>
<div class="act" style="left:1194px;top:550.15px">更多</div>
<svg class="a" style="left:1212.8px;top:552.95px" width="6" height="4" viewBox="0 0 6 4"><path d="M0.8 0.6 H5 L2.9 3.2 Z" fill="#adb1b8"/></svg>
<div class="cb" style="top:587.23px"></div>
<div class="td" style="left:258.9px;top:587.83px;transform:translateX(-50%) scaleY(1.18);color:#737373">9</div>
<div class="a" style="left:300.5px;top:587.73px;width:8.5px;height:8px;background:#cbcbcb;filter:blur(0.5px)"></div>
<div class="a" style="left:296px;top:579.73px;width:17px;height:24px;background:#f6f6f6;filter:blur(1.5px);opacity:0.7"></div>
<div class="a" style="left:324.7px;top:589.73px;width:16.3px;height:8px;background:#a9c8f4;filter:blur(0.5px)"></div>
<div class="a" style="left:489px;top:582.73px;width:57px;height:7px;background:#eeeeee;filter:blur(0.7px)"></div>
<div class="a" style="left:483px;top:589.73px;width:63px;height:8px;background:#e4e4e4;filter:blur(0.7px)"></div>
<div class="a" style="left:489px;top:590.73px;width:52px;height:7px;background:#cdcdcd;filter:blur(0.7px)"></div>
<div class="a" style="left:603px;top:583.73px;width:7px;height:15px;background:#f1f1f1;filter:blur(0.6px)"></div>
<div class="a" style="left:610px;top:583.73px;width:8px;height:15px;background:linear-gradient(180deg,#e4e4e4 0%,#e4e4e4 45%,#d0d0d0 50%,#d0d0d0 100%);filter:blur(0.6px)"></div>
<div class="td" style="left:730.6px;top:587.83px;transform:translateX(-50%) scaleY(1.18);color:#737373">2022-04-11 14:12:13</div>
<div class="td" style="left:829.7px;top:587.73px;transform:translateX(-50%);">接口推送</div>
<div class="td" style="left:928.5px;top:587.83px;transform:translateX(-50%) scaleY(1.18);color:#737373">2022-04-11 14:12:13</div>
<div class="act" style="left:1088.7px;top:587.73px">编辑</div>
<div class="act" style="left:1118.2px;top:587.73px">打标签</div>
<div class="act" style="left:1156.2px;top:587.73px">写跟进</div>
<div class="act" style="left:1194px;top:587.73px">更多</div>
<svg class="a" style="left:1212.8px;top:590.53px" width="6" height="4" viewBox="0 0 6 4"><path d="M0.8 0.6 H5 L2.9 3.2 Z" fill="#adb1b8"/></svg>
<div class="red" style="left:1079px;top:279.3px;width:152.5px;height:22.1px"></div>
<div class="t" style="left:380px;top:398.7px;font-size:9.5px;color:#3b86f5">g</div>
<div class="a" style="left:296px;top:613px;width:60px;height:6px;background:#bdbdbd;clip-path:polygon(0 0,100% 0,92% 100%,8% 100%);filter:blur(0.3px)"></div>
<div class="a" style="left:498px;top:608px;width:34px;height:8px;border-radius:50%;background:#c4c4c4;clip-path:inset(50% 0 0 0);filter:blur(0.4px)"></div>
<div class="a" style="left:602px;top:603px;width:22px;height:22px;border-radius:50%;background:#c2c2c2;clip-path:inset(50% 0 0 0);filter:blur(0.3px)"></div>
<div class="a" style="left:633px;top:570.4px;width:188.4px;height:14px;border-radius:7px;background:#fff;box-shadow:0 1px 4px rgba(0,0,0,0.12)"></div>
<div class="a" style="left:636px;top:575.5px;width:175px;height:4px;border-radius:2px;background:#eef0f3"></div>
<div class="a" style="left:635.6px;top:575.6px;width:157.2px;height:3.8px;border-radius:2px;background:#2d7af2"></div>
<div class="t" style="left:1075.5px;top:555px;font-size:14px;color:rgba(140,140,140,0.55)">激活 Windows</div>
<div class="t" style="left:1075.5px;top:573.5px;font-size:9.5px;color:rgba(140,140,140,0.5);letter-spacing:0.3px">转到“设置”以激活 Windows。</div>
<div class="a" style="left:1263px;top:89px;width:4px;height:98px;background:#c1c1c1"></div>
<div class="a" style="left:1260.3px;top:301.3px;width:10px;height:38px;border-radius:2px;background:#3d4048"></div>
<div class="a" style="left:1262.5px;top:304.0px;width:3px;height:3px;background:#8a6f7a"></div>
<div class="a" style="left:1262.5px;top:308.3px;width:3px;height:3px;background:#a08a60"></div>
<div class="a" style="left:1262.5px;top:312.6px;width:3px;height:3px;background:#9aa060"></div>
<div class="a" style="left:1262.5px;top:316.9px;width:3px;height:3px;background:#80a060"></div>
<div class="a" style="left:1262.5px;top:321.2px;width:3px;height:3px;background:#6fa070"></div>
<div class="a" style="left:1262.5px;top:325.5px;width:3px;height:3px;background:#60a080"></div>
<div class="a" style="left:1262.5px;top:329.8px;width:3px;height:3px;background:#5a9a90"></div>
<div class="a" style="left:1262.5px;top:334.1px;width:3px;height:3px;background:#6090a0"></div>
</body></html>
